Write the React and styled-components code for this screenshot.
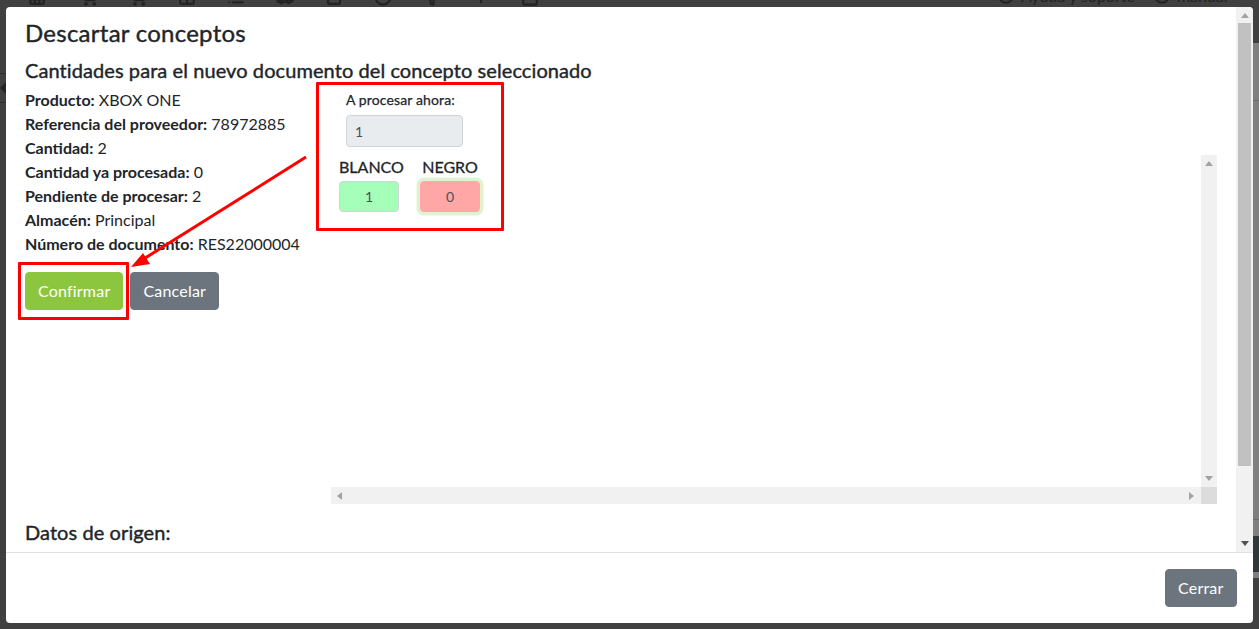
import React from "react";
import styled, { createGlobalStyle } from "styled-components";
import { Grid3x3, ShoppingCart, Columns2, List, Truck, Archive, Circle, Filter, Plus, Calendar, CircleHelp, Clock } from "lucide-react";

const Global = createGlobalStyle`
  html, body { margin: 0; padding: 0; height: 100%; overflow: hidden; background: #404040; }
  * { box-sizing: border-box; }
  body { font-family: Lato, "Open Sans", sans-serif; font-size: 16px; line-height: 24px; color: #212529; }
`;

const Page = styled.div`
  position: relative;
  width: 1259px;
  height: 629px;
  display: flex;
  flex-direction: column;
  background: #404040;
  overflow: hidden;
`;

const TopBar = styled.div`
  height: 43px;
  flex: none;
  display: flex;
  align-items: flex-start;
  padding-left: 28px;
  color: #232323;
  overflow: hidden;
`;

const TopIcon = styled.span`
  width: ${p => p.$w || 51}px;
  flex: none;
  display: block;
  margin-top: -12px;
  height: 18px;
  svg { display: block; }
`;

const TopLink = styled.span`
  display: flex;
  gap: 7px;
  margin-top: -14px;
  font-size: 16px;
  line-height: 20px;
  margin-left: ${p => p.$ml || 0}px;
  white-space: nowrap;
  svg { margin-top: 2px; }
`;

const PageBody = styled.div`
  flex: 1;
  display: flex;
  justify-content: space-between;
`;

const LeftEdge = styled.div`
  width: 6px;
  padding-top: 30px;
`;

const EdgeLine = styled.div`
  height: 30px;
  border-top: 1px solid #2c2c2c;
  border-bottom: 1px solid #2c2c2c;
  display: flex;
  align-items: center;
`;

const EdgeArrow = styled.div`
  border-style: solid;
  border-width: 6px 6px 6px 0;
  border-color: transparent #20242a transparent transparent;
`;

const RightEdge = styled.div`
  width: 6px;
  height: 535px;
  display: flex;
  flex-direction: column;
  background: #7f7f7f;
`;

const EdgeRule = styled.div`
  flex: none;
  height: 1px;
  margin-top: ${p => p.$mt}px;
  background: #6c6c6c;
`;

const EdgeBlock = styled.div`
  flex: none;
  height: 36px;
  margin-top: 16px;
  background: #30373b;
`;

const Modal = styled.div`
  position: absolute;
  top: 7px;
  left: 6px;
  width: 1247px;
  height: 616px;
  background: #fff;
  border-radius: 4px;
  display: flex;
  flex-direction: column;
  overflow: hidden;
`;

const ModalMain = styled.div`
  flex: 1;
  min-height: 0;
  display: flex;
`;

const ModalBody = styled.div`
  flex: 1;
  min-width: 0;
  padding: 10px 19px 0;
  display: flex;
  flex-direction: column;
`;

const Title = styled.h4`
  margin: 0;
  font-size: 24px;
  line-height: 32px;
  font-weight: 400;
  letter-spacing: 0.25px;
  -webkit-text-stroke: 0.4px #212529;
  color: #212529;
`;

const Subtitle = styled.h5`
  margin: 8px 0 0;
  font-size: 20px;
  line-height: 27px;
  font-weight: 400;
  letter-spacing: 0.08px;
  -webkit-text-stroke: 0.4px #212529;
  color: #212529;
`;

const Columns = styled.div`
  display: flex;
  margin-top: 4px;
`;

const Details = styled.div`
  width: 306px;
  flex: none;
`;

const Line = styled.div`
  height: 24px;
  white-space: nowrap;
`;

const Actions = styled.div`
  display: flex;
  gap: 7px;
  margin-top: 16px;
`;

const Button = styled.button`
  height: 38px;
  padding: 0 ${p => p.$pad || 12}px;
  border: 1px solid ${p => p.$bg};
  border-radius: 4px;
  background: ${p => p.$bg};
  color: #fff;
  font: 400 16px/24px Lato, sans-serif;
  letter-spacing: 0.2px;
`;

const Process = styled.div`
  flex: 1;
  min-width: 0;
  display: flex;
  flex-direction: column;
`;

const ProcessHead = styled.div`
  padding: 2px 0 0 15px;
  height: 67px;
`;

const SmallLabel = styled.div`
  font-size: 14px;
  font-weight: 400;
  letter-spacing: 0.13px;
  -webkit-text-stroke: 0.25px #212529;
  line-height: 20px;
  height: 19px;
`;

const ReadOnly = styled.input`
  display: block;
  width: 117px;
  height: 32px;
  padding: 0 8px;
  border: 1px solid #ced4da;
  border-radius: 4px;
  background: #e9ecef;
  color: #495057;
  font: 400 14px Lato, sans-serif;
  margin-top: 6px;
`;

const Scroller = styled.div`
  width: 886px;
  height: 349px;
  display: grid;
  grid-template-columns: 870px 16px;
  grid-template-rows: 332px 17px;
`;

const ScrollContent = styled.div`
  padding: 0 8px;
  display: flex;
  gap: 15px;
  align-items: flex-start;
`;

const Variant = styled.div`
  width: ${p => p.$w}px;
  display: flex;
  flex-direction: column;
  align-items: ${p => p.$align};
`;

const VariantName = styled.div`
  font-size: 16px;
  font-weight: 400;
  -webkit-text-stroke: 0.3px #212529;
  line-height: 24px;
  height: 26px;
  white-space: nowrap;
`;

const VariantInput = styled.input`
  display: block;
  width: 60px;
  height: 31px;
  text-align: center;
  border: 1px solid ${p => (p.$focus ? "#ffa6a6" : "#ced4da")};
  border-radius: 4px;
  background: ${p => p.$bg};
  color: #495057;
  font: 400 14px Lato, sans-serif;
  box-shadow: ${p => (p.$focus ? "0 0 0 3.5px rgba(140,198,62,.25)" : "none")};
  outline: none;
`;

const VTrack = styled.div`
  background: #f1f1f1;
  display: flex;
  flex-direction: column;
  align-items: center;
  justify-content: space-between;
  padding: ${p => p.$pad || "6px 0"};
  flex: none;
`;

const HTrack = styled.div`
  background: #f1f1f1;
  display: flex;
  align-items: center;
  justify-content: space-between;
  padding: 0 7px 0 6px;
`;

const Corner = styled.div`
  background: #dcdcdc;
`;

const Thumb = styled.div`
  width: 13px;
  height: 443px;
  background: #c1c1c1;
  margin-top: 5px;
`;

const Tri = styled.span`
  width: 0;
  height: 0;
  display: block;
  flex: none;
  border-style: solid;
  ${p => p.$dir === "up" && `border-width: 0 4px 5px; border-color: transparent transparent ${p.$c} transparent;`}
  ${p => p.$dir === "down" && `border-width: 5px 4px 0; border-color: ${p.$c} transparent transparent transparent;`}
  ${p => p.$dir === "left" && `border-width: 4px 5px 4px 0; border-color: transparent ${p.$c} transparent transparent;`}
  ${p => p.$dir === "right" && `border-width: 4px 0 4px 5px; border-color: transparent transparent transparent ${p.$c};`}
`;

const Origin = styled.h5`
  margin: 15px 0 0;
  font-size: 20px;
  line-height: 27px;
  font-weight: 400;
  letter-spacing: 0.08px;
  -webkit-text-stroke: 0.4px #212529;
`;

const MainScroll = styled(VTrack)`
  width: 17px;
  padding: 6px 0 6px;
`;

const ThumbGroup = styled.div`
  display: flex;
  flex-direction: column;
  align-items: center;
`;

const Footer = styled.div`
  height: 71px;
  flex: none;
  border-top: 1px solid #dee2e6;
  display: flex;
  justify-content: flex-end;
  align-items: flex-start;
  padding: 16px 16px 0 0;
`;

const RedBox = styled.div`
  position: absolute;
  left: ${p => p.$x}px;
  top: ${p => p.$y}px;
  width: ${p => p.$w}px;
  height: ${p => p.$h}px;
  border: 3px solid #fe0000;
  border-radius: 1px;
  pointer-events: none;
`;

const ArrowLayer = styled.svg`
  position: absolute;
  left: 0;
  top: 0;
  pointer-events: none;
`;

const B = styled.b`
  font-weight: 700;
`;

const rows = [
  ["Producto:", "XBOX ONE"],
  ["Referencia del proveedor:", "78972885"],
  ["Cantidad:", "2"],
  ["Cantidad ya procesada:", "0"],
  ["Pendiente de procesar:", "2"],
  ["Almacén:", "Principal"],
  ["Número de documento:", "RES22000004"],
];

const topIcons = [Grid3x3, ShoppingCart, ShoppingCart, Columns2, List, Truck, Archive, Circle, Filter, Plus, Calendar];

export default function App() {
  return (
    <Page>
      <Global />
      <TopBar>
        {topIcons.map((I, i) => (
          <TopIcon key={i} $w={i === 10 ? 477 : i === 0 ? 52 : 49}>
            <I size={18} strokeWidth={3} />
          </TopIcon>
        ))}
        <TopLink>
          <CircleHelp size={16} strokeWidth={3} />
          Ayuda y soporte
        </TopLink>
        <TopLink $ml={19}>
          <Clock size={16} strokeWidth={3} />
          manual
        </TopLink>
      </TopBar>
      <PageBody>
        <LeftEdge>
          <EdgeLine>
            <EdgeArrow />
          </EdgeLine>
        </LeftEdge>
        <RightEdge>
          <EdgeRule $mt={57} />
          <EdgeRule $mt={418} />
          <EdgeBlock />
        </RightEdge>
      </PageBody>

      <Modal>
        <ModalMain>
          <ModalBody>
            <Title>Descartar conceptos</Title>
            <Subtitle>Cantidades para el nuevo documento del concepto seleccionado</Subtitle>
            <Columns>
              <Details>
                {rows.map(([k, v]) => (
                  <Line key={k}>
                    <B>{k}</B> {v}
                  </Line>
                ))}
                <Actions>
                  <Button $bg="#8cc63e">Confirmar</Button>
                  <Button $bg="#6c757d">Cancelar</Button>
                </Actions>
              </Details>
              <Process>
                <ProcessHead>
                  <SmallLabel>A procesar ahora:</SmallLabel>
                  <ReadOnly readOnly value="1" />
                </ProcessHead>
                <Scroller>
                  <ScrollContent>
                    <Variant $w={66} $align="flex-start">
                      <VariantName>BLANCO</VariantName>
                      <VariantInput readOnly value="1" $bg="#a6ffb8" />
                    </Variant>
                    <Variant $w={60} $align="center">
                      <VariantName>NEGRO</VariantName>
                      <VariantInput readOnly value="0" $bg="#ffa6a6" $focus />
                    </Variant>
                  </ScrollContent>
                  <VTrack>
                    <Tri $dir="up" $c="#a3a3a3" />
                    <Tri $dir="down" $c="#a3a3a3" />
                  </VTrack>
                  <HTrack>
                    <Tri $dir="left" $c="#a3a3a3" />
                    <Tri $dir="right" $c="#a3a3a3" />
                  </HTrack>
                  <Corner />
                </Scroller>
              </Process>
            </Columns>
            <Origin>Datos de origen:</Origin>
          </ModalBody>
          <MainScroll>
            <ThumbGroup>
              <Tri $dir="up" $c="#a3a3a3" />
              <Thumb />
            </ThumbGroup>
            <Tri $dir="down" $c="#505050" />
          </MainScroll>
        </ModalMain>
        <Footer>
          <Button $bg="#6c757d" $pad={12.5}>Cerrar</Button>
        </Footer>
      </Modal>

      <RedBox $x={316} $y={82} $w={188} $h={149} />
      <RedBox $x={18} $y={262} $w={111} $h={58} />
      <ArrowLayer width="1259" height="629" viewBox="0 0 1259 629">
        <line x1="306" y1="157" x2="142" y2="260" stroke="#fe0000" strokeWidth="3" />
        <polygon points="131,267 143,253 150,264" fill="#fe0000" />
      </ArrowLayer>
    </Page>
  );
}
